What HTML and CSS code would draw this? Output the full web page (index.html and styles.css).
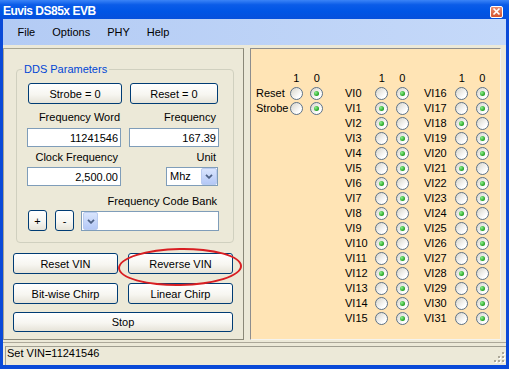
FILE: index.html
```html
<!DOCTYPE html>
<html lang="en">
<head>
    <meta charset="UTF-8">
    <meta name="viewport" content="width=device-width, initial-scale=1.0">
    <title>Euvis DS85x EVB</title>
    <link rel="stylesheet" href="styles.css">
</head>
<body>
<div class="window">
    <div class="titlebar">
        <span class="title">Euvis DS85x EVB</span>
        <span class="close">
            <svg width="9" height="9" viewBox="0 0 9 9"><path d="M1.5 1.5 L7.5 7.5 M7.5 1.5 L1.5 7.5" stroke="#fff" stroke-width="1.7" fill="none"/></svg>
        </span>
    </div>
    <div class="frame">
        <div class="menubar">
            <span>File</span>
            <span>Options</span>
            <span>PHY</span>
            <span>Help</span>
        </div>
        <div class="client">
            <div class="panes">
                <div class="left-pane">
                    <fieldset class="group">
                        <legend>DDS Parameters</legend>
                        <div class="pair">
                            <button class="btn strobe">Strobe = 0</button>
                            <button class="btn reset">Reset = 0</button>
                        </div>
                        <div class="pair labels">
                            <span class="lab-a">Frequency Word</span>
                            <span class="lab-b">Frequency</span>
                        </div>
                        <div class="pair inputs">
                            <input type="text" class="field" value="11241546">
                            <input type="text" class="field" value="167.39">
                        </div>
                        <div class="pair labels">
                            <span class="lab-c">Clock Frequency</span>
                            <span class="lab-b">Unit</span>
                        </div>
                        <div class="pair inputs">
                            <input type="text" class="field" value="2,500.00">
                            <div class="select">
                                <span>Mhz</span>
                                <span class="drop"><svg width="8" height="5" viewBox="0 0 8 5"><path d="M1 0.8 L4 3.8 L7 0.8" stroke="#4d6185" stroke-width="1.8" fill="none"/></svg></span>
                            </div>
                        </div>
                        <div class="bank-label">Frequency Code Bank</div>
                        <div class="bank-row">
                            <button class="btn small">+</button>
                            <button class="btn small minus">-</button>
                            <div class="combo">
                                <span class="drop"><svg width="8" height="5" viewBox="0 0 8 5"><path d="M1 0.8 L4 3.8 L7 0.8" stroke="#4d6185" stroke-width="1.8" fill="none"/></svg></span>
                            </div>
                        </div>
                    </fieldset>

                    <div class="actions">
                        <button class="btn">Reset VIN</button>
                        <span class="circled"><button class="btn">Reverse VIN</button></span>
                        <button class="btn">Bit-wise Chirp</button>
                        <button class="btn">Linear Chirp</button>
                        <button class="btn stop">Stop</button>
                    </div>
                </div>

                <div class="right-pane">
                    <div class="rg rg-a">
                        <span></span><span class="hd">1</span><span class="hd">0</span>
                        <span class="lbl">Reset</span><i class="rb"></i><i class="rb on"></i>
                        <span class="lbl">Strobe</span><i class="rb"></i><i class="rb on"></i>
                    </div>
                    <div class="rg rg-b">
                        <span></span><span class="hd">1</span><span class="hd">0</span>
                        <span class="lbl">VI0</span><i class="rb"></i><i class="rb on"></i>
                        <span class="lbl">VI1</span><i class="rb on"></i><i class="rb"></i>
                        <span class="lbl">VI2</span><i class="rb on"></i><i class="rb"></i>
                        <span class="lbl">VI3</span><i class="rb"></i><i class="rb on"></i>
                        <span class="lbl">VI4</span><i class="rb"></i><i class="rb on"></i>
                        <span class="lbl">VI5</span><i class="rb"></i><i class="rb on"></i>
                        <span class="lbl">VI6</span><i class="rb on"></i><i class="rb"></i>
                        <span class="lbl">VI7</span><i class="rb"></i><i class="rb on"></i>
                        <span class="lbl">VI8</span><i class="rb on"></i><i class="rb"></i>
                        <span class="lbl">VI9</span><i class="rb"></i><i class="rb on"></i>
                        <span class="lbl">VI10</span><i class="rb on"></i><i class="rb"></i>
                        <span class="lbl">VI11</span><i class="rb"></i><i class="rb on"></i>
                        <span class="lbl">VI12</span><i class="rb on"></i><i class="rb"></i>
                        <span class="lbl">VI13</span><i class="rb"></i><i class="rb on"></i>
                        <span class="lbl">VI14</span><i class="rb"></i><i class="rb on"></i>
                        <span class="lbl">VI15</span><i class="rb"></i><i class="rb on"></i>
                    </div>
                    <div class="rg rg-c">
                        <span></span><span class="hd">1</span><span class="hd">0</span>
                        <span class="lbl">VI16</span><i class="rb"></i><i class="rb on"></i>
                        <span class="lbl">VI17</span><i class="rb"></i><i class="rb on"></i>
                        <span class="lbl">VI18</span><i class="rb on"></i><i class="rb"></i>
                        <span class="lbl">VI19</span><i class="rb"></i><i class="rb on"></i>
                        <span class="lbl">VI20</span><i class="rb"></i><i class="rb on"></i>
                        <span class="lbl">VI21</span><i class="rb on"></i><i class="rb"></i>
                        <span class="lbl">VI22</span><i class="rb"></i><i class="rb on"></i>
                        <span class="lbl">VI23</span><i class="rb"></i><i class="rb on"></i>
                        <span class="lbl">VI24</span><i class="rb on"></i><i class="rb"></i>
                        <span class="lbl">VI25</span><i class="rb"></i><i class="rb on"></i>
                        <span class="lbl">VI26</span><i class="rb"></i><i class="rb on"></i>
                        <span class="lbl">VI27</span><i class="rb"></i><i class="rb on"></i>
                        <span class="lbl">VI28</span><i class="rb on"></i><i class="rb"></i>
                        <span class="lbl">VI29</span><i class="rb"></i><i class="rb on"></i>
                        <span class="lbl">VI30</span><i class="rb"></i><i class="rb on"></i>
                        <span class="lbl">VI31</span><i class="rb"></i><i class="rb on"></i>
                    </div>
                </div>
            </div>

            <div class="statusbar">
                <div class="status-text">Set VIN=11241546</div>
                <svg class="grip" width="12" height="12" viewBox="0 0 12 12">
                    <g fill="#fff">
                        <rect x="9" y="1" width="2" height="2"/>
                        <rect x="5" y="5" width="2" height="2"/><rect x="9" y="5" width="2" height="2"/>
                        <rect x="1" y="9" width="2" height="2"/><rect x="5" y="9" width="2" height="2"/><rect x="9" y="9" width="2" height="2"/>
                    </g>
                    <g fill="#aca899">
                        <rect x="8" y="0" width="2" height="2"/>
                        <rect x="4" y="4" width="2" height="2"/><rect x="8" y="4" width="2" height="2"/>
                        <rect x="0" y="8" width="2" height="2"/><rect x="4" y="8" width="2" height="2"/><rect x="8" y="8" width="2" height="2"/>
                    </g>
                </svg>
            </div>
        </div>
    </div>
</div>
</body>
</html>
```

FILE: styles.css
```css
* {
    box-sizing: border-box;
}
body {
    margin: 0;
    width: 509px;
    height: 369px;
    overflow: hidden;
    font-family: "Liberation Sans", Arial, sans-serif;
    font-size: 11px;
    line-height: 13px;
    color: #000;
}
.window {
    display: flex;
    flex-direction: column;
    height: 369px;
}
.titlebar {
    height: 19px;
    padding: 4px 6px 0 3px;
    display: flex;
    align-items: center;
    justify-content: space-between;
    background: linear-gradient(#3b84f7, #0b5ce8 25%, #0055e5 60%, #0650dc);
    color: #fff;
}
.title {
    font-weight: bold;
    font-size: 12px;
    letter-spacing: -0.5px;
}
.close {
    width: 13px;
    height: 12px;
    border: 1px solid #fff;
    border-radius: 2px;
    background: linear-gradient(#ea8d70, #d4532f);
    display: flex;
    align-items: center;
    justify-content: center;
}
.frame {
    flex: 1;
    display: flex;
    flex-direction: column;
    border: 3px solid #0a4ad8;
    border-top: 0;
    border-bottom-width: 4px;
}
.menubar {
    height: 26px;
    display: flex;
    align-items: center;
    padding-left: 6px;
    background: linear-gradient(to right, #b3cbf4, #c5d9f9);
}
.menubar span {
    padding: 0 8.5px;
}
.client {
    flex: 1;
    background: #ece9d8;
    padding-top: 3px;
    display: flex;
    flex-direction: column;
}
.panes {
    display: flex;
    gap: 6px;
    height: 292px;
}

/* left side */
.left-pane {
    width: 241px;
    border: 1px solid #a7a593;
    border-right-color: #8a8878;
    border-bottom-color: #8a8878;
}
.group {
    margin: 14px 0 0 12px;
    width: 218px;
    border: 1px solid #d0d0bf;
    border-radius: 4px;
    padding: 7px 13px 11px 10px;
}
.group legend {
    color: #0046d5;
    padding: 0 2px;
    margin-left: -5px;
    line-height: 13px;
}
.pair {
    display: grid;
    grid-template-columns: 94px 90px;
    column-gap: 8px;
}
.btn {
    font-family: inherit;
    font-size: 11px;
    color: #000;
    height: 21px;
    padding: 0;
    border: 1px solid #003c74;
    border-radius: 3px;
    background: linear-gradient(#ffffff, #f7f6f1 55%, #e6e3d8);
}
.strobe {
    width: 94px;
    margin-left: 1px;
}
.reset {
    width: 88px;
    margin-left: 1px;
}
.labels {
    margin-top: 7px;
    text-align: right;
}
.labels + .inputs {
    margin-top: 4px;
}
.inputs + .labels {
    margin-top: 4px;
}
.labels + .inputs + .labels + .inputs {
    margin-top: 3px;
}
.lab-a {
    padding-right: 1px;
}
.lab-b {
    padding-right: 3px;
}
.lab-c {
    padding-right: 3px;
}
.field {
    width: 100%;
    height: 19px;
    border: 1px solid #7f9db9;
    background: #fff;
    font-family: inherit;
    font-size: 11px;
    text-align: right;
    padding: 0 2px;
    color: #000;
}
.inputs .field:nth-child(2) {
    margin-right: 0;
}
.select {
    justify-self: end;
    margin-right: 1px;
    width: 52px;
    height: 19px;
    border: 1px solid #7f9db9;
    background: #fff;
    display: flex;
    align-items: center;
    justify-content: space-between;
    padding: 0 0 0 3px;
}
.drop {
    width: 16px;
    height: 17px;
    border: 1px solid #b9cbf0;
    border-radius: 2px;
    background: linear-gradient(#d9e5fd, #b4c8f6);
    display: flex;
    align-items: center;
    justify-content: center;
}
.bank-label {
    margin-top: 9px;
    text-align: right;
    padding-right: 3px;
}
.bank-row {
    margin-top: 2px;
    display: flex;
    align-items: flex-start;
}
.small {
    width: 19px;
    margin-left: 1px;
}
.minus {
    margin-left: 8px;
}
.combo {
    width: 138px;
    height: 20px;
    margin: 1px 0 0 7px;
    border: 1px solid #7f9db9;
    background: #fff;
    padding: 0 0 0 1px;
    display: flex;
    align-items: center;
}
.combo .drop {
    width: 15px;
    height: 18px;
}
.actions {
    margin: 10px 0 0 9px;
    display: grid;
    grid-template-columns: 105px 105px;
    column-gap: 10px;
    row-gap: 9px;
}
.actions .btn {
    width: 100%;
}
.actions .stop {
    grid-column: span 2;
    height: 20px;
    margin-top: -1px;
}
.circled {
    position: relative;
    display: block;
}
.circled::after {
    content: "";
    position: absolute;
    left: -10px;
    top: -5px;
    width: 120px;
    height: 34px;
    border: 2px solid #d81e22;
    border-radius: 50%;
    transform: rotate(-1deg);
    pointer-events: none;
}

/* right side */
.right-pane {
    width: 251px;
    background: #ffe4b5;
    border: 1px solid;
    border-color: #8d8d8d #f4f3ee #f4f3ee #8d8d8d;
    padding: 22px 0 0 5px;
    display: flex;
    align-items: flex-start;
}
.rg {
    display: grid;
    grid-auto-rows: 15px;
    align-items: center;
}
.rg-a {
    grid-template-columns: 30px 20.5px 20.5px;
}
.rg-b {
    grid-template-columns: 26.5px 20.5px 20.5px;
    margin-left: 18px;
}
.rg-c {
    grid-template-columns: 27.5px 20.5px 20.5px;
    margin-left: 11.5px;
}
.hd {
    text-align: center;
    line-height: 15px;
}
.lbl {
    white-space: nowrap;
    line-height: 15px;
}
.rb {
    width: 13px;
    height: 13px;
    border-radius: 50%;
    border: 1px solid #5d7289;
    background: linear-gradient(135deg, #d6d4cb, #ffffff 75%);
    justify-self: center;
    position: relative;
}
.rb.on::after {
    content: "";
    position: absolute;
    left: 3px;
    top: 3px;
    width: 5px;
    height: 5px;
    border-radius: 50%;
    background: radial-gradient(circle at 35% 35%, #8ef08e, #21a121 70%);
}

/* status bar */
.statusbar {
    flex: 1;
    margin-top: 2px;
    border-top: 1px solid #aca899;
    padding-top: 3px;
    position: relative;
}
.status-text {
    height: 100%;
    margin-left: 2px;
    padding-left: 1px;
    border-top: 1px solid #a09e90;
    border-left: 1px solid #a09e90;
}
.grip {
    position: absolute;
    right: 0;
    bottom: 1px;
}
```
